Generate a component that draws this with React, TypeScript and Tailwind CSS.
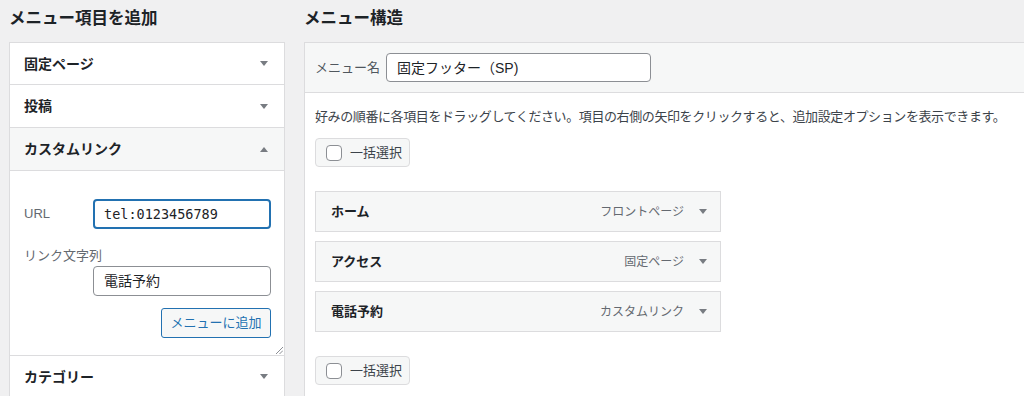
import React from "react";

const FONT = '"Liberation Sans", "Noto Sans CJK JP", sans-serif';

function Tri({ up, w = 8, h = 5 }: { up?: boolean; w?: number; h?: number }) {
  return (
    <svg width={w} height={h} viewBox={`0 0 ${w} ${h}`} className="block text-[#787c82]">
      <polygon points={up ? `0,${h} ${w},${h} ${w / 2},0` : `0,0 ${w},0 ${w / 2},${h}`} fill="currentColor" />
    </svg>
  );
}

function AccRow({ title, h, open, bg }: { title: string; h: string; open?: boolean; bg?: string }) {
  return (
    <div className={`${h} ${bg ?? "bg-white"} flex items-center justify-between pl-[14px] pr-[16px] border-b border-[#dcdcde]`}>
      <span className="text-[14px] font-semibold leading-[20px] text-[#1d2327]">{title}</span>
      <Tri up={open} />
    </div>
  );
}

function MenuItem({ title, type, mt }: { title: string; type: string; mt: string }) {
  return (
    <div className={`${mt} w-[406px] h-[41px] bg-[#f6f7f7] border border-[#dcdcde] flex items-center pl-[15px] pr-[13px]`}>
      <span className="text-[13px] font-semibold leading-[20px] text-[#1d2327]">{title}</span>
      <span className="ml-auto text-[12px] leading-[20px] text-[#646970]">{type}</span>
      <span className="ml-[15px]">
        <Tri w={8} h={5} />
      </span>
    </div>
  );
}

function BulkSelect({ mt }: { mt: string }) {
  return (
    <div className={`${mt} w-[95px] h-[29px] bg-[#f6f7f7] border border-[#dcdcde] rounded-[4px] flex items-center pl-[10px]`}>
      <span className="w-[16px] h-[16px] bg-white border border-[#8c8f94] rounded-[4px]" />
      <span className="ml-[8px] text-[13px] leading-[20px] text-[#3c434a]">一括選択</span>
    </div>
  );
}

export default function App() {
  return (
    <div
      className="w-[1024px] h-[396px] overflow-hidden bg-[#f0f0f1] flex pl-[9px] gap-[19px]"
      style={{ fontFamily: FONT }}
    >
      {/* Left column */}
      <div className="w-[276px] shrink-0">
        <h2 className="h-[42px] pt-[7px] text-[16.5px] font-semibold leading-[23px] text-[#1d2327]">メニュー項目を追加</h2>
        <div className="border-l border-r border-t border-[#dcdcde] bg-white">
          <AccRow title="固定ページ" h="h-[42px]" />
          <AccRow title="投稿" h="h-[43px]" />
          <AccRow title="カスタムリンク" h="h-[43px]" open bg="bg-[#f6f7f7]" />
          <div className="relative h-[185px] border-b border-[#dcdcde] pl-[14px] pr-[13px] pt-[28px]">
            <div className="flex items-center justify-between">
              <span className="text-[13px] leading-[20px] text-[#646970]">URL</span>
              <div className="w-[178px] h-[30px] rounded-[4px] border-2 border-[#2271b1] flex items-center pl-[9px]">
                <span
                  className="text-[13.5px] leading-[20px] text-[#1d2327]"
                  style={{ fontFamily: '"DejaVu Sans Mono", "Liberation Mono", monospace' }}
                >
                  tel:0123456789
                </span>
              </div>
            </div>
            <div className="mt-[17px] text-[13px] leading-[20px] text-[#646970]">リンク文字列</div>
            <div className="flex justify-end">
              <div className="w-[178px] h-[30px] rounded-[4px] border border-[#8c8f94] bg-white flex items-center pl-[10px]">
                <span className="text-[14px] leading-[20px] text-[#1d2327]">電話予約</span>
              </div>
            </div>
            <div className="flex justify-end mt-[12px]">
              <div className="w-[110px] h-[30px] rounded-[3px] border border-[#2271b1] bg-[#f6f7f7] flex items-center justify-center">
                <span className="text-[13px] leading-[20px] text-[#2271b1]">メニューに追加</span>
              </div>
            </div>
            <svg width="8" height="8" viewBox="0 0 8 8" className="absolute right-[1px] bottom-[1px]">
              <line x1="1" y1="8" x2="8" y2="1" stroke="#8c8f94" strokeWidth="1" />
              <line x1="4.5" y1="8" x2="8" y2="4.5" stroke="#8c8f94" strokeWidth="1" />
            </svg>
          </div>
          <AccRow title="カテゴリー" h="h-[42px]" />
        </div>
      </div>

      {/* Right column */}
      <div className="w-[740px] shrink-0">
        <h2 className="h-[42px] pt-[7px] text-[16.5px] font-semibold leading-[23px] text-[#1d2327]">メニュー構造</h2>
        <div className="border border-[#dcdcde] bg-white h-[400px]">
          <div className="h-[50px] bg-[#f6f7f7] border-b border-[#dcdcde] flex items-center pl-[10px]">
            <span className="text-[13px] leading-[20px] text-[#50575e]">メニュー名</span>
            <div className="ml-[6px] w-[265px] h-[29px] rounded-[4px] border border-[#8c8f94] bg-white flex items-center pl-[10px]">
              <span className="text-[14px] leading-[20px] text-[#1d2327]">固定フッター（SP)</span>
            </div>
          </div>
          <div className="pl-[10px] pt-[14px]">
            <p className="text-[13px] tracking-[-0.4px] leading-[20px] text-[#3c434a] whitespace-nowrap">
              好みの順番に各項目をドラッグしてください。項目の右側の矢印をクリックすると、追加設定オプションを表示できます。
            </p>
            <BulkSelect mt="mt-[11px]" />
            <MenuItem title="ホーム" type="フロントページ" mt="mt-[24px]" />
            <MenuItem title="アクセス" type="固定ページ" mt="mt-[9px]" />
            <MenuItem title="電話予約" type="カスタムリンク" mt="mt-[9px]" />
            <BulkSelect mt="mt-[24px]" />
          </div>
        </div>
      </div>
    </div>
  );
}
